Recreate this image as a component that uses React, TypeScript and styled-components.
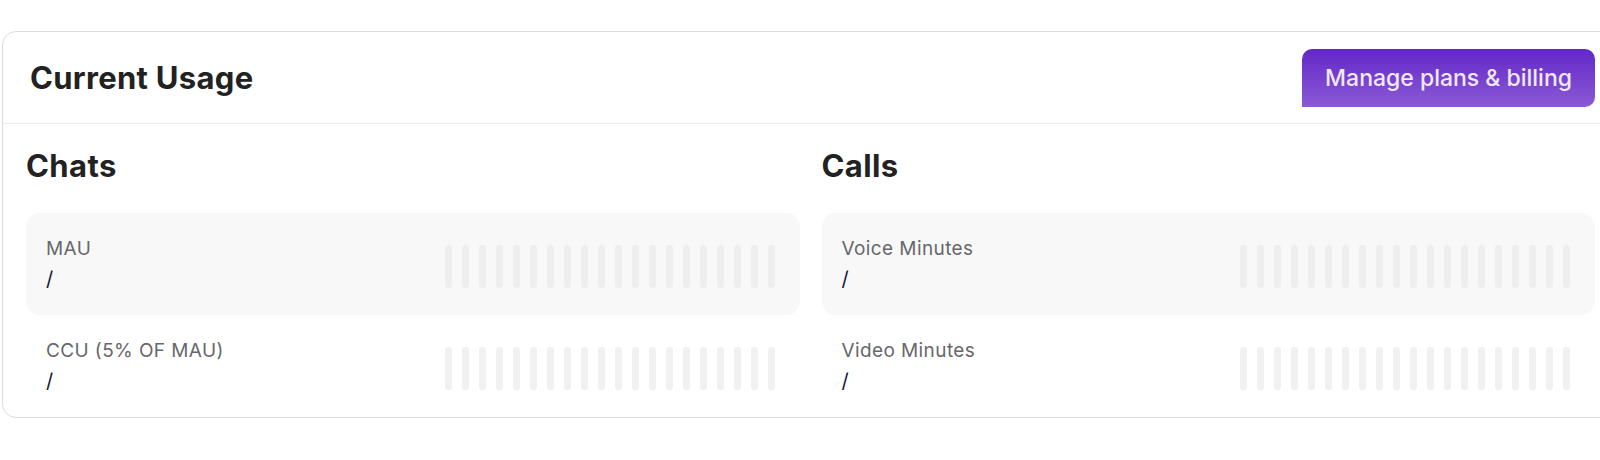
import React from 'react';
import styled, { createGlobalStyle } from 'styled-components';

const GlobalStyle = createGlobalStyle`
  html, body {
    margin: 0;
    padding: 0;
    background: #fff;
    overflow: hidden;
  }
  body {
    font-family: Inter, "Liberation Sans", Arial, sans-serif;
    color: #222;
  }
`;

const Page = styled.div`
  padding: 31px 0 0 2px;
`;

const Card = styled.section`
  box-sizing: border-box;
  width: 1618px;
  background: #fff;
  border: 1px solid #dcdcdc;
  border-radius: 14px;
`;

const Header = styled.header`
  display: flex;
  align-items: center;
  justify-content: space-between;
  height: 91px;
  padding: 0 24px 0 27px;
  border-bottom: 1px solid #ececec;
`;

const Title = styled.h1`
  margin: 0;
  font-size: 31px;
  font-weight: 700;
  line-height: 36px;
  color: #222;
  letter-spacing: 0.3px;
`;

const BillingButton = styled.button`
  height: 58px;
  padding: 0 23px;
  border: none;
  border-radius: 10px 10px 10px 0;
  background: linear-gradient(180deg, #6327c8 0%, #8b5ad5 100%);
  color: #efe9fb;
  font-family: inherit;
  font-size: 23px;
  font-weight: 500;
  cursor: pointer;
`;

const Body = styled.div`
  display: grid;
  grid-template-columns: 1fr 1fr;
  column-gap: 22px;
  padding: 24px 24px 0 23px;
`;

const Column = styled.div`
  display: flex;
  flex-direction: column;
`;

const SectionTitle = styled.h2`
  margin: 0 0 29px 0;
  font-size: 31px;
  font-weight: 700;
  line-height: 36px;
  color: #222;
  letter-spacing: 0.4px;
`;

const Row = styled.div<{ $shaded?: boolean }>`
  display: flex;
  align-items: center;
  justify-content: space-between;
  height: 102px;
  padding: 0 25px 0 20px;
  border-radius: 14px;
  background: ${(p) => (p.$shaded ? '#f8f8f8' : 'transparent')};
`;

const Texts = styled.div`
  display: flex;
  flex-direction: column;
  gap: 6px;
`;

const Label = styled.span`
  font-size: 19px;
  line-height: 24px;
  color: #67676c;
  letter-spacing: 0.4px;
`;

const Value = styled.span`
  font-size: 20px;
  line-height: 24px;
  color: #16163a;
`;

const Bars = styled.div`
  display: flex;
  gap: 10px;
  margin-top: 5px;
`;

const Bar = styled.span<{ $shaded?: boolean }>`
  width: 7px;
  height: 43px;
  border-radius: 3px;
  background: ${(p) => (p.$shaded ? '#eeeeee' : '#f1f1f1')};
`;

const sections = [
  { title: 'Chats', rows: ['MAU', 'CCU (5% OF MAU)'] },
  { title: 'Calls', rows: ['Voice Minutes', 'Video Minutes'] },
];

function UsageRow({ label, shaded }: { label: string; shaded: boolean }) {
  return (
    <Row $shaded={shaded}>
      <Texts>
        <Label>{label}</Label>
        <Value>/</Value>
      </Texts>
      <Bars>
        {Array.from({ length: 20 }).map((_, i) => (
          <Bar key={i} $shaded={shaded} />
        ))}
      </Bars>
    </Row>
  );
}

export default function App() {
  return (
    <>
      <GlobalStyle />
      <Page>
        <Card>
          <Header>
            <Title>Current Usage</Title>
            <BillingButton>Manage plans &amp; billing</BillingButton>
          </Header>
          <Body>
            {sections.map((s) => (
              <Column key={s.title}>
                <SectionTitle>{s.title}</SectionTitle>
                {s.rows.map((r, i) => (
                  <UsageRow key={r} label={r} shaded={i === 0} />
                ))}
              </Column>
            ))}
          </Body>
        </Card>
      </Page>
    </>
  );
}
